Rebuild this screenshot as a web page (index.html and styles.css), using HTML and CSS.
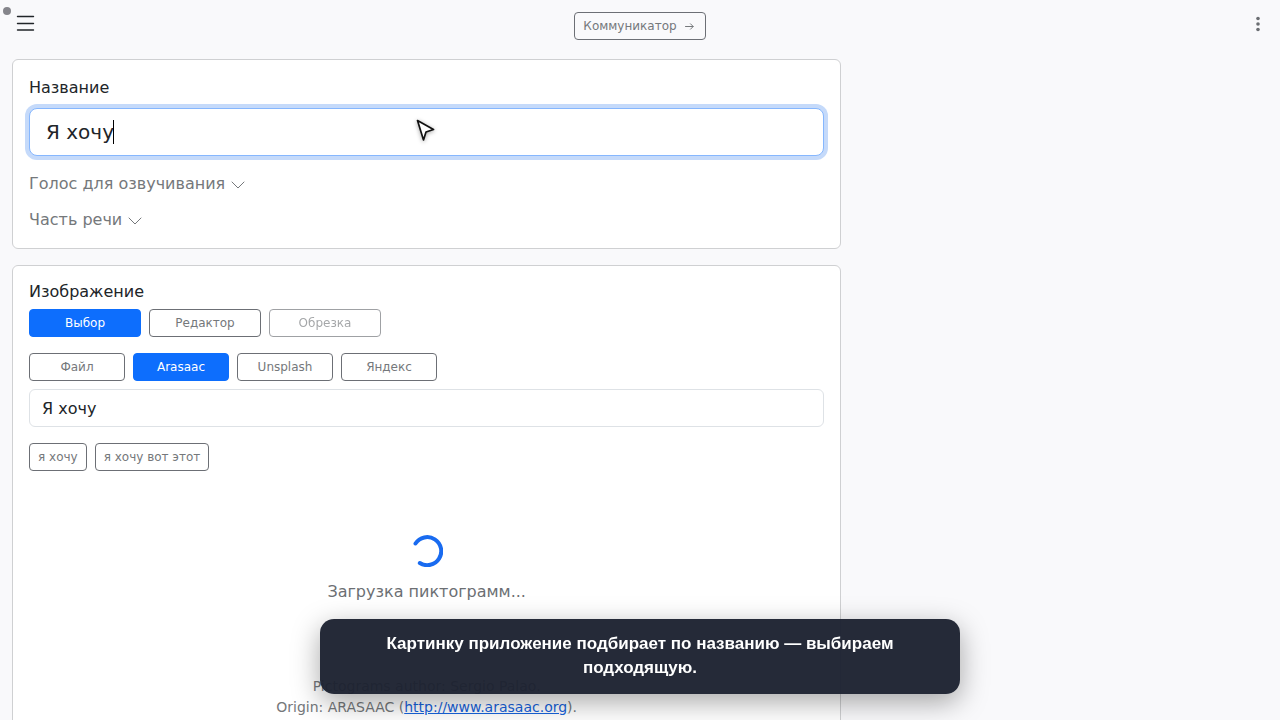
FILE: index.html
```html
<!DOCTYPE html>
<html lang="ru">
    <head>
        <meta charset="UTF-8">
        <meta name="viewport" content="width=device-width, initial-scale=1">
        <title>Название</title>

        <link rel="stylesheet" href="styles.css">
    </head>

    <body>
        <span class="status-dot"></span>

        <header class="topbar">
            <button type="button" class="icon-btn" aria-label="Меню">
                <svg width="20" height="20" viewBox="0 0 20 20" fill="none" stroke="#212529" stroke-width="1.4" stroke-linecap="round">
                    <path d="M1.500 2.500h16M1.500 9.500h16M1.500 16h16"/>
                </svg>
            </button>
            <button type="button" class="btn btn-outline btn-switch">Коммуникатор
                <svg width="14" height="14" viewBox="0 0 14 14" fill="none" stroke="currentColor" stroke-linecap="round" stroke-linejoin="round"><path d="M2.500 7.500h7.500M7.500 4.800l2.700 2.700-2.700 2.700"/></svg>
            </button>
            <button type="button" class="icon-btn icon-btn-end" aria-label="Ещё">
                <svg width="20" height="20" viewBox="0 0 20 20" fill="#6b6e72">
                    <circle cx="10" cy="4.5" r="1.8"/>
                    <circle cx="10" cy="10" r="1.8"/>
                    <circle cx="10" cy="15.5" r="1.8"/>
                </svg>
            </button>
        </header>

        <main class="content">
            <section class="card">
                <label for="title" class="label">Название</label>
                <div class="title-field">
                    <input type="text" id="title" class="input input-lg" value="Я хочу">
                    <span class="caret"></span>
                </div>

                <button type="button" class="toggle">Голос для озвучивания
                    <svg width="14" height="14" viewBox="0 0 14 14" fill="none" stroke="currentColor" stroke-linecap="round" stroke-linejoin="round"><path d="M1 5l6 6 6-6"/></svg>
                </button>
                <button type="button" class="toggle">Часть речи
                    <svg width="14" height="14" viewBox="0 0 14 14" fill="none" stroke="currentColor" stroke-linecap="round" stroke-linejoin="round"><path d="M1 5l6 6 6-6"/></svg>
                </button>
            </section>

            <section class="card">
                <h2 class="card-title">Изображение</h2>

                <div class="btn-row modes">
                    <button type="button" class="btn btn-primary">Выбор</button>
                    <button type="button" class="btn btn-outline">Редактор</button>
                    <button type="button" class="btn btn-outline" disabled>Обрезка</button>
                </div>

                <div class="btn-row sources">
                    <button type="button" class="btn btn-outline">Файл</button>
                    <button type="button" class="btn btn-primary">Arasaac</button>
                    <button type="button" class="btn btn-outline">Unsplash</button>
                    <button type="button" class="btn btn-outline">Яндекс</button>
                </div>

                <input type="text" class="input" aria-label="Поиск пиктограмм" value="Я хочу">

                <div class="btn-row hints">
                    <button type="button" class="btn btn-outline">я хочу</button>
                    <button type="button" class="btn btn-outline">я хочу вот этот</button>
                </div>

                <div class="loading">
                    <svg class="spinner" width="32" height="32" viewBox="0 0 32 32" fill="none" stroke="#196bf0" stroke-width="4" stroke-linecap="round">
                        <path d="M4.500 8.500A14 14 0 1 1 8.800 28"/>
                    </svg>
                    <span>Загрузка пиктограмм...</span>
                </div>

                <p class="credits">
                    Pictograms author: Sergio Palao.<br>
                    Origin: ARASAAC (<a href="http://www.arasaac.org">http://www.arasaac.org</a>).
                </p>
            </section>
        </main>

        <!-- Tour caption and pointer -->
        <div class="caption">Картинку приложение подбирает по названию — выбираем подходящую.</div>

        <svg class="pointer" width="24" height="24" viewBox="0 0 24 24" fill="#fff" stroke="#111" stroke-width="1.7" stroke-linejoin="round">
            <path d="M3.500 2.500l16 9-7.5 2.500L9.500 22z"/>
        </svg>
    </body>
</html>
```
FILE: styles.css
```css
* {
    box-sizing: border-box;
}

body {
    margin: 0;
    height: 100vh;
    overflow: hidden;
    background-color: #f9f9fb;
    color: #212529;
    font-family: "DejaVu Sans", sans-serif;
    font-size: 16px;
    line-height: 24px;
}

button, input {
    font-family: inherit;
}

.status-dot {
    position: absolute;
    top: 7px;
    left: 3px;
    width: 8px;
    height: 8px;
    border-radius: 50%;
    background-color: #85858b;
}

.topbar {
    display: grid;
    grid-template-columns: 1fr auto 1fr;
    align-items: start;
    padding: 12px 8px 19px;
}

.icon-btn {
    display: flex;
    justify-content: center;
    width: 36px;
    height: 24px;
    padding: 2px 8px;
    border: none;
    background: none;
    cursor: pointer;
}

.icon-btn-end {
    justify-self: end;
    width: 28px;
    padding: 2px 4px;
}

.content {
    display: flex;
    flex-direction: column;
    gap: 16px;
    width: 66.6667%;
    padding: 0 12px;
}

.card {
    display: flex;
    flex-direction: column;
    padding: 16px;
    background-color: #fff;
    border: 1px solid #cfd0d2;
    border-radius: 6px;
}

.label {
    margin-bottom: 8px;
}

.input {
    width: 100%;
    height: 38px;
    padding: 6px 12px;
    border: 1px solid #dee2e6;
    border-radius: 6px;
    background-color: #fff;
    color: #212529;
    font-size: 16px;
    line-height: 24px;
}

.input-lg {
    display: block;
    height: 48px;
    padding: 8px 16px;
    border-color: #86b7fe;
    border-radius: 8px;
    outline: none;
    box-shadow: 0 0 0 4px #c5dafa;
    font-size: 20px;
    line-height: 30px;
}

.title-field {
    position: relative;
    margin-bottom: 16px;
}

.caret {
    position: absolute;
    top: 12px;
    left: 84px;
    width: 1px;
    height: 24px;
    background-color: #000;
}

.toggle {
    display: flex;
    align-items: center;
    align-self: flex-start;
    gap: 6px;
    padding: 0;
    border: none;
    background: none;
    color: #75787b;
    font-size: 16px;
    line-height: 24px;
    cursor: pointer;
}

.toggle + .toggle {
    margin-top: 12px;
}

.card-title {
    margin: 0 0 8px;
    font-size: 16px;
    font-weight: normal;
    line-height: 19px;
}

.btn {
    height: 28px;
    padding: 0 8px;
    border: 1px solid #6c6f75;
    border-radius: 4px;
    background-color: transparent;
    color: #75787b;
    font-size: 12px;
    line-height: 18px;
    cursor: pointer;
}

.btn-switch {
    display: flex;
    align-items: center;
    gap: 6px;
}

.btn-primary {
    background-color: #0d6efd;
    border-color: #0d6efd;
    color: #fff;
}

.btn:disabled {
    opacity: 0.65;
}

.btn-row {
    display: flex;
    gap: 8px;
}

.modes {
    margin-bottom: 16px;
}

.modes .btn {
    width: 112px;
}

.sources {
    margin-bottom: 8px;
}

.sources .btn {
    width: 96px;
}

.hints {
    margin-top: 16px;
}

.loading {
    display: flex;
    flex-direction: column;
    align-items: center;
    gap: 13px;
    padding: 64px 0 72px;
    color: #6c6f73;
}

.credits {
    margin: 0;
    color: #75787b;
    font-size: 14px;
    line-height: 21px;
    text-align: center;
}

.credits a {
    color: #1763dc;
}

.caption {
    position: fixed;
    bottom: 26px;
    left: 25%;
    width: 50%;
    padding: 13px 28px 14px;
    border-radius: 14px;
    background-color: rgba(28, 33, 48, 0.96);
    box-shadow: 0 8px 28px rgba(0, 0, 0, 0.35);
    color: #fff;
    font-family: "Liberation Sans", Arial, sans-serif;
    font-size: 17px;
    font-weight: bold;
    line-height: 24px;
    text-align: center;
}

.pointer {
    position: absolute;
    top: 118px;
    left: 414px;
    filter: drop-shadow(0 1px 2px rgba(0, 0, 0, 0.35));
}
```
